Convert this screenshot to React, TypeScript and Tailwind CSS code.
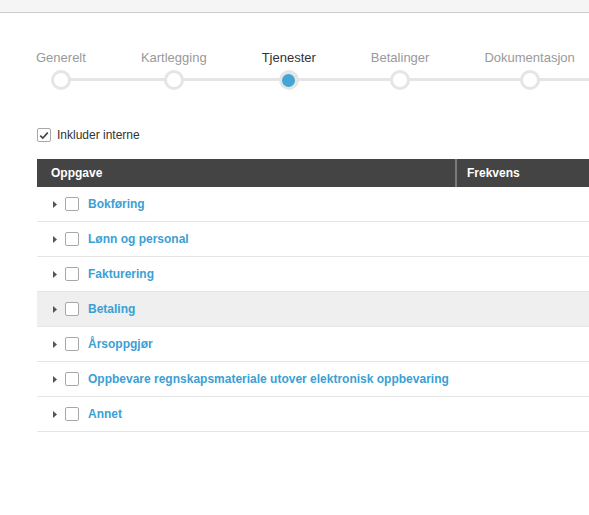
import React from "react";

const steps = [
  { label: "Generelt", state: "idle" },
  { label: "Kartlegging", state: "idle" },
  { label: "Tjenester", state: "active" },
  { label: "Betalinger", state: "idle" },
  { label: "Dokumentasjon", state: "idle" },
];

const tasks = [
  { name: "Bokføring" },
  { name: "Lønn og personal" },
  { name: "Fakturering" },
  { name: "Betaling", hover: true },
  { name: "Årsoppgjør" },
  { name: "Oppbevare regnskapsmateriale utover elektronisk oppbevaring" },
  { name: "Annet" },
];

function Caret() {
  return (
    <svg width="4" height="7" viewBox="0 0 4 7" className="block">
      <path d="M0 0 L4 3.5 L0 7 Z" fill="#555555" />
    </svg>
  );
}

function Box({ checked = false }: { checked?: boolean }) {
  return (
    <span className="flex h-[14px] w-[14px] items-center justify-center rounded-[2px] border border-[#a8a8a8] bg-white">
      {checked && (
        <svg width="10" height="9" viewBox="0 0 10 9">
          <path d="M1.2 4.6 L3.8 7.1 L8.8 1.6" fill="none" stroke="#444444" strokeWidth="1.6" />
        </svg>
      )}
    </span>
  );
}

export default function App() {
  return (
    <div
      className="h-[515px] w-full overflow-hidden bg-white"
      style={{ fontFamily: '"Liberation Sans", Arial, sans-serif' }}
    >
      <div className="h-[13px] border-b border-[#cccccc] bg-[#f5f5f5]" />

      {/* wizard steps */}
      <div className="relative mt-[38px]">
        <div className="absolute left-[60px] right-0 top-[27px] h-[3px] bg-[#e5e5e5]" />
        <div className="relative flex gap-[55px] pl-[36px]">
          {steps.map((s) => (
            <div key={s.label} className="flex flex-col items-center">
              <span
                className={
                  "text-[13px] leading-[14px] " +
                  (s.state === "active" ? "text-[#333333]" : "text-[#999999]")
                }
              >
                {s.label}
              </span>
              <span
                className={
                  "mt-[5px] flex h-[20px] w-[20px] items-center justify-center rounded-full border-[3px] border-[#e5e5e5] " +
                  (s.state === "active" ? "bg-[#e5e5e5]" : "bg-white")
                }
              >
                {s.state === "active" && (
                  <span className="h-[13px] w-[13px] rounded-full bg-[#45a5d3]" />
                )}
              </span>
            </div>
          ))}
        </div>
      </div>

      <div className="pl-[37px]">
        <label className="mt-[38px] flex items-center gap-[6px]">
          <Box checked />
          <span className="text-[12px] leading-[14px] text-[#333333]">Inkluder interne</span>
        </label>

        <div className="mt-[17px]">
          <div className="flex h-[28px] bg-[#444444] text-[12px] font-bold text-white">
            <div className="flex w-[420px] items-center border-r-2 border-[#7a7a7a] pl-[14px]">
              Oppgave
            </div>
            <div className="flex flex-1 items-center pl-[10px]">Frekvens</div>
          </div>

          {tasks.map((t) => (
            <div
              key={t.name}
              className={
                "flex h-[35px] items-center border-b border-[#e5e5e5] pl-[16px] " +
                (t.hover ? "bg-[#efefef]" : "bg-white")
              }
            >
              <Caret />
              <span className="ml-[8px]">
                <Box />
              </span>
              <span className="ml-[9px] text-[12px] font-bold leading-[14px] text-[#3b9fd4]">
                {t.name}
              </span>
            </div>
          ))}
        </div>
      </div>
    </div>
  );
}
